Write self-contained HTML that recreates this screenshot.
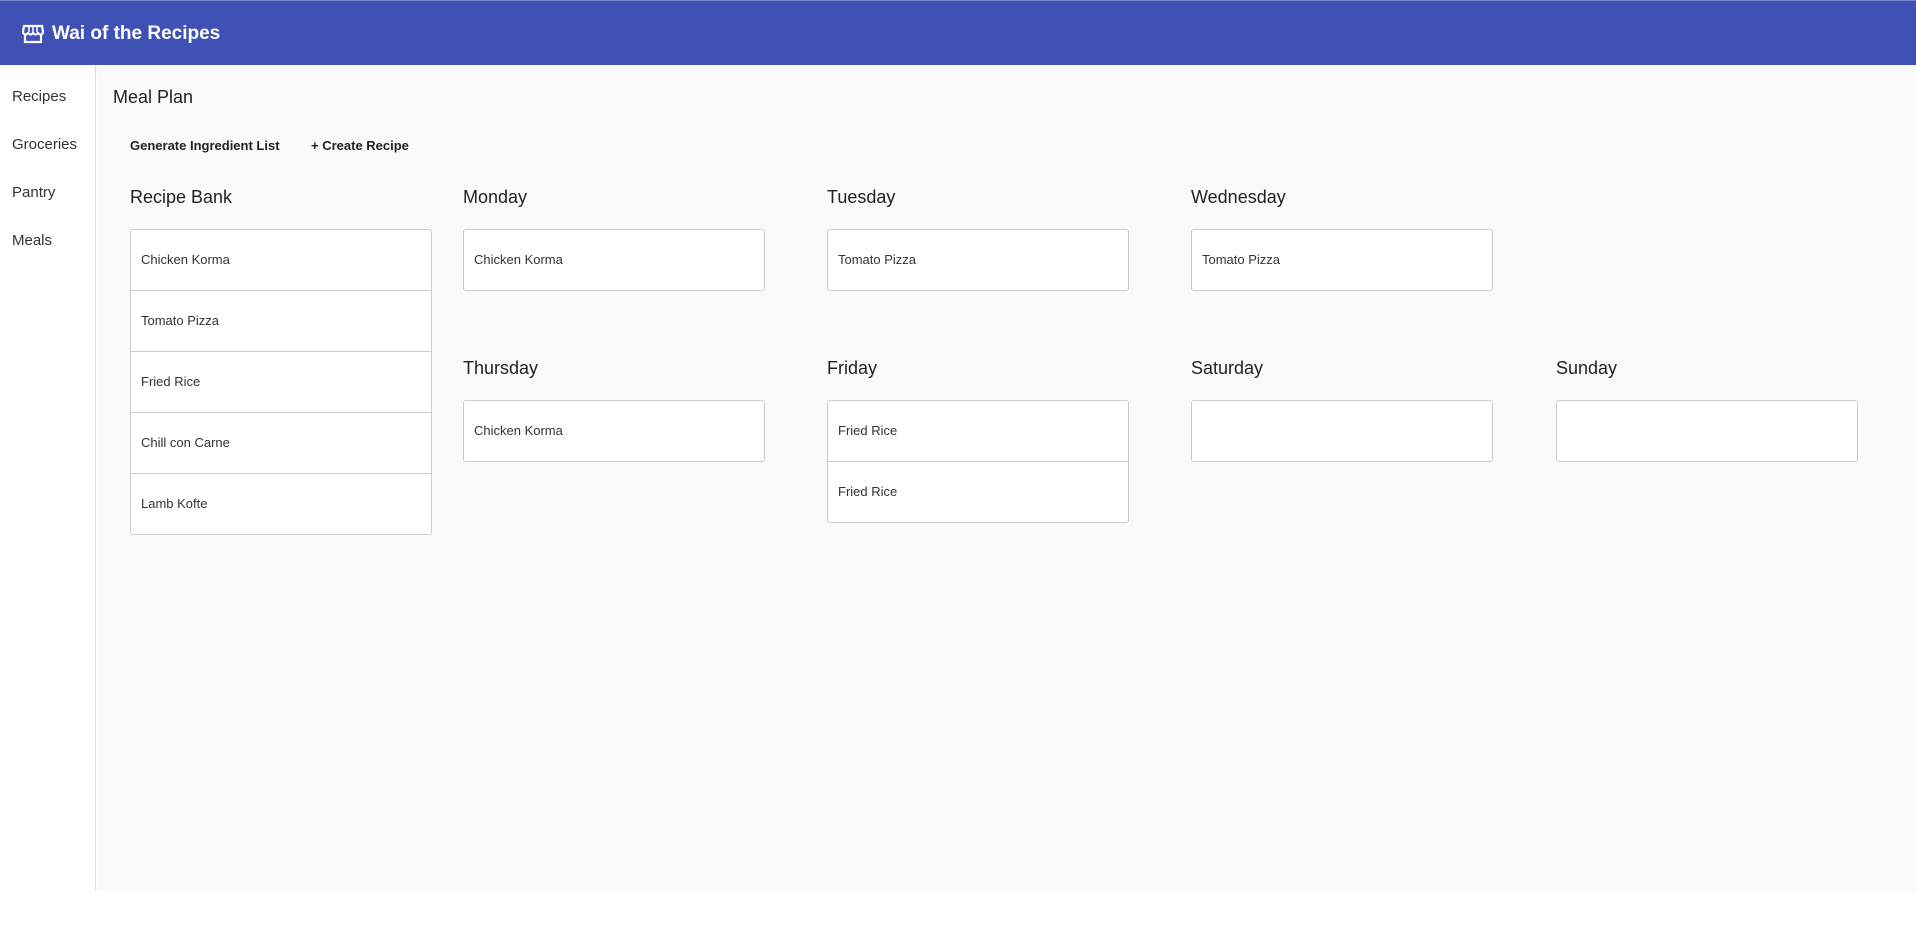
<!DOCTYPE html>
<html><head><meta charset="utf-8"><style>
*{box-sizing:border-box;margin:0;padding:0}
body{width:1916px;height:934px;background:#fff;font-family:"Liberation Sans",sans-serif;position:relative;overflow:hidden;color:#222}
.hdr{position:absolute;left:0;top:0;width:1916px;height:65px;background:#3f51b5;border-top:1px solid #7986cb}
.hdr .t{position:absolute;left:52px;top:22px;color:#fff;font-size:19px;font-weight:bold}
.hdr svg{position:absolute;left:22px;top:23px}
.side{position:absolute;left:0;top:65px;width:96px;height:825px;border-right:1px solid #ddd;background:#fff}
.side div{position:absolute;left:12px;font-size:15px;color:#333}
.main{position:absolute;left:97px;top:65px;width:1819px;height:825px;background:#fafafa}
h1{position:absolute;left:113px;top:87px;font-size:18px;font-weight:500;color:#222}
.btn{position:absolute;top:138px;font-size:13px;font-weight:bold;color:#222}
h2{position:absolute;font-size:18px;font-weight:normal;color:#222}
.card{position:absolute;width:302px;background:#fff;border:1px solid #ccc;border-radius:3px}
.card div{height:61px;line-height:59px;padding-left:10px;font-size:13px;color:#333;border-top:1px solid #ccc}
.card div:first-child{border-top:none;height:60px}
</style></head><body>
<div class="hdr"><svg width="22" height="20" viewBox="0 0 22 20" fill="none" stroke="#fff" stroke-width="2.2"><path d="M2 2h18l1 6a2.5 2.5 0 0 1-5 0a2.5 2.5 0 0 1-5 0a2.5 2.5 0 0 1-5 0a2.5 2.5 0 0 1-5 0z"/><path d="M3 10v8h16v-8"/><path d="M7 2v6M11 2v6M15 2v6" stroke-width="1.5"/></svg><div class="t">Wai of the Recipes</div></div>
<div class="side">
<div style="top:23px">Recipes</div>
<div style="top:71px">Groceries</div>
<div style="top:119px">Pantry</div>
<div style="top:167px">Meals</div>
</div>
<div class="main"></div>
<h1>Meal Plan</h1>
<div class="btn" style="left:130px">Generate Ingredient List</div>
<div class="btn" style="left:311px">+ Create Recipe</div>
<h2 style="left:130px;top:187px;font-weight:500">Recipe Bank</h2>
<h2 style="left:463px;top:187px">Monday</h2>
<h2 style="left:827px;top:187px">Tuesday</h2>
<h2 style="left:1191px;top:187px">Wednesday</h2>
<h2 style="left:463px;top:358px">Thursday</h2>
<h2 style="left:827px;top:358px">Friday</h2>
<h2 style="left:1191px;top:358px">Saturday</h2>
<h2 style="left:1556px;top:358px">Sunday</h2>
<div class="card" style="left:130px;top:229px"><div>Chicken Korma</div><div>Tomato Pizza</div><div>Fried Rice</div><div>Chill con Carne</div><div>Lamb Kofte</div></div>
<div class="card" style="left:463px;top:229px"><div>Chicken Korma</div></div>
<div class="card" style="left:827px;top:229px"><div>Tomato Pizza</div></div>
<div class="card" style="left:1191px;top:229px"><div>Tomato Pizza</div></div>
<div class="card" style="left:463px;top:400px"><div>Chicken Korma</div></div>
<div class="card" style="left:827px;top:400px"><div>Fried Rice</div><div>Fried Rice</div></div>
<div class="card" style="left:1191px;top:400px;height:62px"></div>
<div class="card" style="left:1556px;top:400px;height:62px"></div>
</body></html>
